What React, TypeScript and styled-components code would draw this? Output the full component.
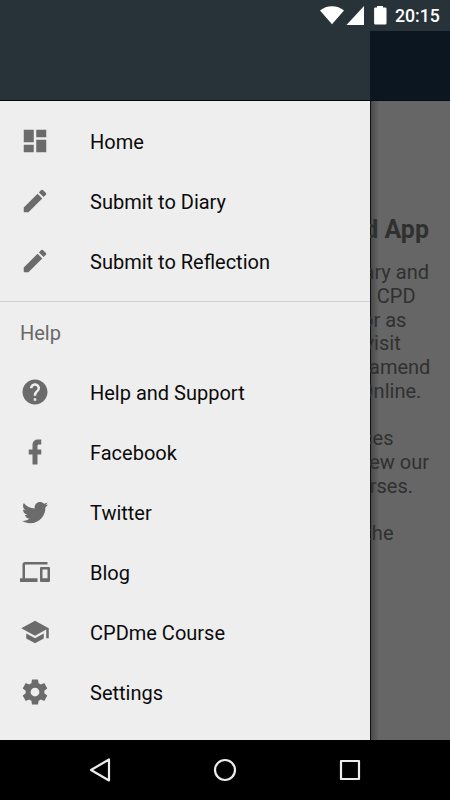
import React from "react";
import styled, { createGlobalStyle } from "styled-components";
import { MdDashboard, MdDevices, MdEdit, MdHelp, MdSchool } from "react-icons/md";

const GlobalStyle = createGlobalStyle`
  * { box-sizing: border-box; }
  body { margin: 0; background: #000; }
`;

const Screen = styled.div`
  display: flex;
  flex-direction: column;
  width: 450px;
  height: 800px;
  overflow: hidden;
  background: #000;
  font-family: Roboto, sans-serif;
`;

const StatusBar = styled.header`
  display: flex;
  align-items: center;
  justify-content: flex-end;
  height: 31px;
  padding-right: 10px;
  background: #283339;
  color: #fff;
`;

const Clock = styled.time`
  width: 45px;
  margin-left: 8px;
  padding-top: 2px;
  font-size: 17.7px;
  font-weight: 500;
  line-height: 21px;
  white-space: nowrap;
`;

const StatusIcons = styled.svg`
  display: block;
  width: 68px;
  height: 31px;
`;

const Body = styled.div`
  display: flex;
  height: 709px;
`;

const Drawer = styled.aside`
  width: 370px;
  background: #eee;
`;

const DrawerHeader = styled.div`
  height: 70px;
  background: #283339;
  border-bottom: 1px solid #050809;
`;

const Group = styled.nav<{ $top: number }>`
  display: flex;
  flex-direction: column;
  padding-top: ${(p) => p.$top}px;
`;

const Item = styled.a`
  display: flex;
  align-items: center;
  gap: 40px;
  height: 60px;
  padding: 1px 20px 0;
  color: #0b0b0b;
  font-size: 20px;
  line-height: 24px;
  white-space: nowrap;

  svg {
    display: block;
    flex: none;
    width: 30px;
    height: 30px;
    margin-bottom: 1px;
    fill: #6b6b6b;
  }
`;

const SectionTitle = styled.h2`
  height: 61px;
  margin: 0;
  padding: 19px 20px 0;
  border-top: 1px solid #d2d2d2;
  color: #686868;
  font-size: 20px;
  font-weight: 400;
  line-height: 24px;
`;

const Page = styled.main`
  width: 80px;
  overflow: hidden;
  background:
    linear-gradient(90deg, #111 0 1px, rgba(0, 0, 0, 0.28) 1px, rgba(0, 0, 0, 0) 9px),
    #666;
  color: #303030;
`;

const Toolbar = styled.div`
  height: 70px;
  background: #0c1621;
  border-bottom: 1px solid #070b12;
`;

const PageTitle = styled.h1`
  display: flex;
  justify-content: flex-end;
  margin: 113px 21px 14px 0;
  font-size: 25px;
  font-weight: 700;
  line-height: 32px;
  white-space: nowrap;
`;

const Line = styled.div<{ $end: number }>`
  display: flex;
  justify-content: flex-end;
  height: 23.75px;
  padding-right: ${(p) => p.$end}px;
  font-size: 20px;
  line-height: 24px;
  white-space: nowrap;
`;

const NavBar = styled.footer`
  display: grid;
  grid-template-columns: repeat(3, 125px);
  place-items: center;
  justify-content: center;
  height: 60px;
  background: #000;

  svg {
    display: block;
    fill: none;
    stroke: #ececec;
    stroke-width: 2.2;
    stroke-linejoin: round;
  }
`;

const FacebookIcon = () => (
  <svg viewBox="0 0 24 24">
    <path d="M17 2v4h-2c-.69 0-1 .81-1 1.5V10h3v4h-3v8h-4v-8H7v-4h3V6a4 4 0 0 1 4-4h3z" />
  </svg>
);

const TwitterIcon = () => (
  <svg viewBox="0 0 24 24">
    <path d="M22.46 6c-.77.35-1.6.58-2.46.69.88-.53 1.56-1.37 1.88-2.38-.83.5-1.75.85-2.72 1.05C18.37 4.5 17.26 4 16 4c-2.35 0-4.27 1.92-4.27 4.29 0 .34.04.67.11.98C8.28 9.09 5.11 7.38 3 4.79c-.37.63-.58 1.37-.58 2.15 0 1.49.75 2.81 1.91 3.56-.71 0-1.37-.2-1.95-.5v.03c0 2.08 1.48 3.82 3.44 4.21a4.22 4.22 0 0 1-1.93.07 4.28 4.28 0 0 0 4 2.98 8.521 8.521 0 0 1-5.33 1.84c-.34 0-.68-.02-1.02-.06C3.44 20.29 5.7 21 8.12 21 16 21 20.33 14.46 20.33 8.79c0-.19 0-.37-.01-.56.84-.6 1.56-1.36 2.14-2.23z" />
  </svg>
);

const GearIcon = () => (
  <svg viewBox="0 0 24 24">
    <path d="M12 15.5A3.5 3.5 0 0 1 8.5 12 3.5 3.5 0 0 1 12 8.5a3.5 3.5 0 0 1 3.5 3.5 3.5 3.5 0 0 1-3.5 3.5m7.43-2.53c.04-.32.07-.64.07-.97 0-.33-.03-.66-.07-1l2.11-1.63c.19-.15.24-.42.12-.64l-2-3.46c-.12-.22-.39-.31-.61-.22l-2.49 1c-.52-.39-1.06-.73-1.69-.98l-.37-2.65A.506.506 0 0 0 14 2h-4c-.25 0-.46.18-.5.42l-.37 2.65c-.63.25-1.17.59-1.69.98l-2.49-1c-.22-.09-.49 0-.61.22l-2 3.46c-.13.22-.07.49.12.64L4.57 11c-.04.34-.07.67-.07 1 0 .33.03.65.07.97l-2.11 1.66c-.19.15-.25.42-.12.64l2 3.46c.12.22.39.3.61.22l2.49-1.01c.52.4 1.06.74 1.69.99l.37 2.65c.04.24.25.42.5.42h4c.25 0 .46-.18.5-.42l.37-2.65c.63-.26 1.17-.59 1.69-.99l2.49 1.01c.22.08.49 0 .61-.22l2-3.46c.12-.22.07-.49-.12-.64l-2.11-1.66z" />
  </svg>
);

const mainItems = [
  { label: "Home", Icon: MdDashboard },
  { label: "Submit to Diary", Icon: MdEdit },
  { label: "Submit to Reflection", Icon: MdEdit },
];

const helpItems = [
  { label: "Help and Support", Icon: MdHelp },
  { label: "Facebook", Icon: FacebookIcon },
  { label: "Twitter", Icon: TwitterIcon },
  { label: "Blog", Icon: MdDevices },
  { label: "CPDme Course", Icon: MdSchool },
  { label: "Settings", Icon: GearIcon },
];

const lines = [
  { text: "ary and", end: 21 },
  { text: "CPD", end: 34.4 },
  { text: "or as", end: 43.6 },
  { text: "visit", end: 49.3 },
  { text: "amend", end: 19.6 },
  { text: "Online.", end: 28.7 },
  { text: "", end: 0 },
  { text: "ces", end: 56.5 },
  { text: "ew our", end: 21 },
  { text: "rses.", end: 37 },
  { text: "", end: 0 },
  { text: "the", end: 56.5 },
];

export default function App() {
  return (
    <Screen>
      <GlobalStyle />
      <StatusBar>
        <StatusIcons viewBox="319 0 68 31" fill="#fff">
          <path d="M320 10.5C326.5 4.7 337.5 4.7 344 10.5L332 24.3Z" />
          <path d="M364 6V25H346.5Z" />
          <path d="M377 6h6v1.5h2.3q1.2 0 1.2 1.2v14.6q0 1.2-1.2 1.2h-10q-1.2 0-1.2-1.2V8.7q0-1.2 1.2-1.2h1.7z" />
        </StatusIcons>
        <Clock>20:15</Clock>
      </StatusBar>
      <Body>
        <Drawer>
          <DrawerHeader />
          <Group $top={10}>
            {mainItems.map(({ label, Icon }) => (
              <Item key={label}><Icon />{label}</Item>
            ))}
          </Group>
          <Group $top={10}>
            <SectionTitle>Help</SectionTitle>
            {helpItems.map(({ label, Icon }) => (
              <Item key={label}><Icon />{label}</Item>
            ))}
          </Group>
        </Drawer>
        <Page>
          <Toolbar />
          <PageTitle>d App</PageTitle>
          {lines.map(({ text, end }, i) => (
            <Line key={i} $end={end}>{text}</Line>
          ))}
        </Page>
      </Body>
      <NavBar>
        <svg width="24" height="26" viewBox="0 0 24 26"><path d="M3 13L21 2.5V23.5Z" /></svg>
        <svg width="24" height="24" viewBox="0 0 24 24"><circle cx="12" cy="12" r="10" /></svg>
        <svg width="22" height="22" viewBox="0 0 22 22"><rect x="2" y="2" width="18" height="18" /></svg>
      </NavBar>
    </Screen>
  );
}
